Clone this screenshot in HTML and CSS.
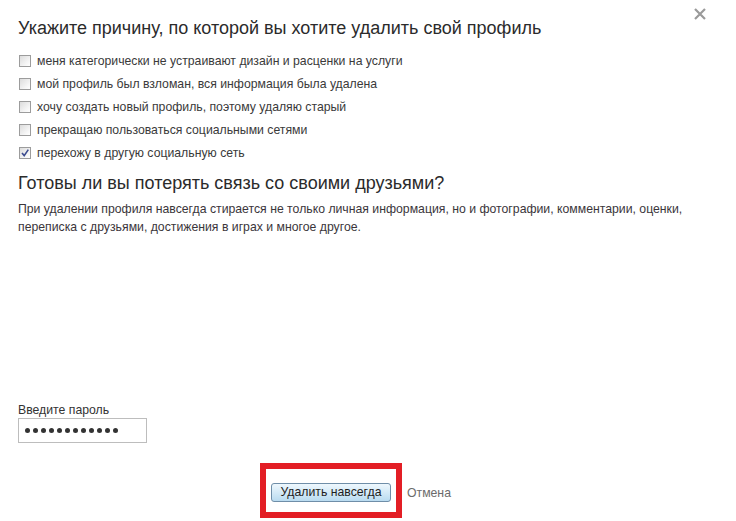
FILE: index.html
```html
<!DOCTYPE html>
<html lang="ru">
<head>
<meta charset="utf-8">
<title>Удаление профиля</title>
<link rel="stylesheet" href="styles.css">
</head>
<body>
<div class="dialog">
  <span class="close" aria-label="Закрыть">
    <svg width="12" height="12" viewBox="0 0 12 12"><path d="M1 1 L11 11 M11 1 L1 11" stroke="#9a9a9a" stroke-width="2.2" fill="none"/></svg>
  </span>
  <h1 class="title">Укажите причину, по которой вы хотите удалить свой профиль</h1>
  <ul class="reasons">
    <li class="reason"><span class="box"></span><span>меня категорически не устраивают дизайн и расценки на услуги</span></li>
    <li class="reason"><span class="box"></span><span>мой профиль был взломан, вся информация была удалена</span></li>
    <li class="reason"><span class="box"></span><span>хочу создать новый профиль, поэтому удаляю старый</span></li>
    <li class="reason"><span class="box"></span><span>прекращаю пользоваться социальными сетями</span></li>
    <li class="reason"><span class="box checked"><svg width="10" height="10" viewBox="0 0 10 10"><path d="M2 5 L4.2 7.6 L8.3 1.6" stroke="#3b4b8f" stroke-width="1.6" fill="none"/></svg></span><span>перехожу в другую социальную сеть</span></li>
  </ul>
  <h2 class="subtitle">Готовы ли вы потерять связь со своими друзьями?</h2>
  <p class="note">При удалении профиля навсегда стирается не только личная информация, но и фотографии, комментарии, оценки, переписка с друзьями, достижения в играх и многое другое.</p>
  <div class="password">
    <div class="label">Введите пароль</div>
    <div class="field">
      <span class="dot"></span><span class="dot"></span><span class="dot"></span><span class="dot"></span><span class="dot"></span><span class="dot"></span><span class="dot"></span><span class="dot"></span><span class="dot"></span><span class="dot"></span><span class="dot"></span><span class="dot"></span>
    </div>
  </div>
  <div class="actions">
    <span class="highlight"><button class="btn" type="button">Удалить навсегда</button></span>
    <a class="cancel" href="#">Отмена</a>
  </div>
</div>
</body>
</html>
```
FILE: styles.css
```css
html, body {
  margin: 0;
  padding: 0;
  background: #fff;
}
body {
  font-family: "Liberation Sans", Arial, sans-serif;
  color: #333;
}
.dialog {
  position: relative;
  padding: 16px 18px 0 18px;
}
.close {
  position: absolute;
  top: 8px;
  left: 694px;
  width: 12px;
  height: 12px;
  display: block;
}
.close svg { display: block; }
.title {
  margin: 0;
  font-size: 18px;
  line-height: 24px;
  font-weight: normal;
  color: #2b2b2b;
}
.reasons {
  list-style: none;
  margin: 9px 0 0 0;
  padding: 0;
}
.reason {
  display: flex;
  align-items: center;
  height: 23px;
  font-size: 12.25px;
  color: #3a3a3a;
}
.box {
  width: 10px;
  height: 10px;
  border: 1px solid #9c9c9c;
  background: linear-gradient(135deg, #dcdcdc, #f6f6f6 70%, #fff);
  margin-left: 1px;
  margin-right: 6px;
  display: flex;
  align-items: center;
  justify-content: center;
  flex: none;
}
.box svg { display: block; }
.subtitle {
  margin: 7px 0 0 0;
  font-size: 18px;
  line-height: 24px;
  font-weight: normal;
  color: #2b2b2b;
}
.note {
  margin: 5px 0 0 0;
  font-size: 12.25px;
  line-height: 18px;
  color: #3b363b;
  max-width: 690px;
}
.password {
  margin-top: 166px;
}
.label {
  font-size: 12.25px;
  line-height: 16px;
  color: #333;
}
.field {
  width: 121px;
  height: 23px;
  border: 1px solid #bdbdbd;
  display: flex;
  align-items: center;
  gap: 3px;
  padding-left: 6px;
  box-sizing: content-box;
}
.dot {
  width: 5px;
  height: 5px;
  border-radius: 50%;
  background: #333;
  flex: none;
}
.actions {
  display: flex;
  align-items: center;
  margin-top: 20px;
  padding-left: 242px;
}
.highlight {
  display: block;
  border: 6px solid #e31e25;
  padding: 14px 5px 10px 5px;
}
.btn {
  display: block;
  width: 120px;
  height: 19px;
  margin: 0;
  padding: 0;
  border: 1px solid #6f8ea8;
  border-radius: 3px;
  background: linear-gradient(#eef7fd, #d4eaf7 50%, #b9dbf0);
  font-family: "Liberation Sans", Arial, sans-serif;
  font-size: 12.25px;
  color: #1e1e1e;
  line-height: 17px;
}
.cancel {
  margin-left: 5px;
  margin-top: 4px;
  font-size: 12.25px;
  color: #6b6b6b;
  text-decoration: none;
}
```
